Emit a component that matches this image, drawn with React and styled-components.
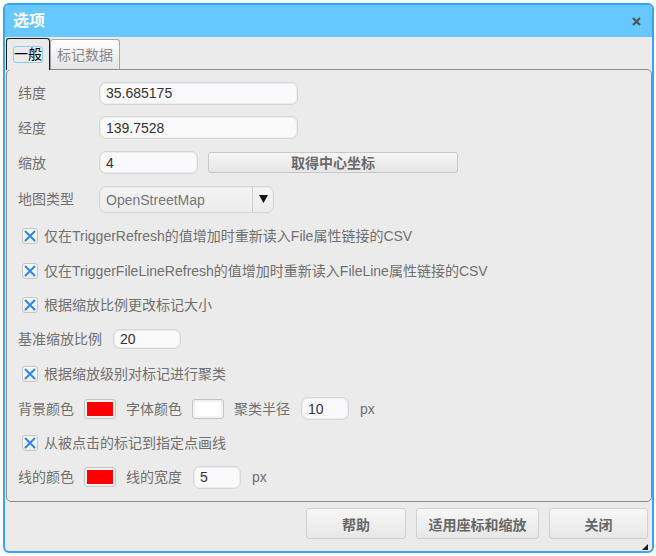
import React from "react";
import styled, { createGlobalStyle } from "styled-components";

const GlobalStyle = createGlobalStyle`
  html, body { margin: 0; padding: 0; background: #ffffff; }
  body {
    font-family: "Liberation Sans", "Noto Sans CJK SC", sans-serif;
    font-size: 14px;
  }
  * { box-sizing: border-box; }
`;

const Page = styled.div`
  padding: 3px 2px 3px 3px;
`;

const Dialog = styled.div`
  position: relative;
  width: 651px;
  height: 550px;
  border: 2px solid #3aa3f3;
  border-radius: 6px;
  background: #ebebeb;
  display: flex;
  flex-direction: column;
  overflow: hidden;
`;

const TitleBar = styled.div`
  height: 32px;
  flex: none;
  background: #66c8ff;
  display: flex;
  align-items: center;
  justify-content: space-between;
  padding: 0 11px 0 8px;
`;

const Title = styled.span`
  color: #ffffff;
  font-weight: bold;
  font-size: 16px;
  line-height: 16px;
`;

const CloseBtn = styled.span`
  display: flex;
  width: 9px;
  height: 9px;
`;

const Body = styled.div`
  flex: 1;
  display: flex;
  flex-direction: column;
  padding: 1px 0 0 1px;
`;

const TabRow = styled.div`
  display: flex;
  align-items: flex-end;
  height: 32px;
  margin-bottom: -1px;
  position: relative;
  z-index: 1;
`;

const Tab = styled.div`
  height: ${(p) => (p.$active ? "32px" : "30px")};
  margin-bottom: ${(p) => (p.$active ? "0" : "1px")};
  width: ${(p) => p.$w}px;
  border: 1px solid ${(p) => (p.$active ? "#1a1a1a" : "#a8a8a8")};
  border-bottom: none;
  border-radius: 3px 3px 0 0;
  background: ${(p) =>
    p.$active ? "#ebebeb" : "linear-gradient(#ffffff, #e4e4e4)"};
  color: ${(p) => (p.$active ? "#000000" : "#888888")};
  display: flex;
  align-items: center;
  padding-left: 6px;
  font-size: 14px;
  line-height: 16px;
`;

const FocusRing = styled.span`
  border: 1px solid #8ccdf6;
  border-radius: 3px;
  line-height: 15px;
`;

const Panel = styled.div`
  height: 433px;
  border: 1px solid #8a8a8a;
  border-radius: 5px;
  padding: 6px 0 0 0;
  display: flex;
  flex-direction: column;
`;

const Row = styled.div`
  height: ${(p) => p.$h}px;
  display: flex;
  align-items: center;
  gap: 10px;
  padding-left: ${(p) => (p.$check ? 15 : 11)}px;
  color: #707070;
  line-height: 16px;
`;

const Label = styled.span`
  width: ${(p) => (p.$w ? `${p.$w}px` : "auto")};
  flex: none;
  color: #707070;
  white-space: nowrap;
`;

const TextInput = styled.div`
  width: ${(p) => p.$w}px;
  height: ${(p) => p.$h || 23}px;
  margin: 0 ${(p) => p.$m || 0}px;
  border: 1px solid #d6d6d6;
  box-shadow: inset 0 0 0 1px #ececec;
  border-radius: 7px;
  background: #fafafc;
  color: #333333;
  display: flex;
  align-items: center;
  padding-left: 6px;
  flex: none;
`;

const WideButton = styled.div`
  width: 250px;
  height: 21px;
  border: 1px solid #c8c8c8;
  border-radius: 3px;
  background: linear-gradient(#f6f6f6, #e6e6e6);
  color: #6a6a6a;
  font-weight: bold;
  display: flex;
  align-items: center;
  justify-content: center;
  flex: none;
`;

const Select = styled.div`
  width: 175px;
  height: 27px;
  border: 1px solid #d6d6d6;
  box-shadow: inset 0 0 0 1px #ececec;
  border-radius: 7px;
  background: linear-gradient(#f4f4f4, #ececec);
  display: flex;
  align-items: stretch;
  color: #777777;
  flex: none;
`;

const SelectText = styled.span`
  flex: 1;
  display: flex;
  align-items: center;
  padding: 2px 0 0 6px;
  border-right: 1px solid #cfcfcf;
`;

const SelectArrow = styled.span`
  width: 20px;
  display: flex;
  align-items: center;
  justify-content: center;
`;

const Check = styled.span`
  width: 16px;
  height: 16px;
  border: 1px solid #c6c6c6;
  border-radius: 3px;
  background: linear-gradient(#fbfbfb, #ededed);
  display: flex;
  align-items: center;
  justify-content: center;
  flex: none;
  margin-right: -4px;
`;

const Swatch = styled.span`
  width: 32px;
  height: 20px;
  border: 1px solid #c4c4c4;
  border-radius: 3px;
  padding: 2px;
  background: #f2f2f2;
  display: flex;
  flex: none;
`;

const SwatchFill = styled.span`
  flex: 1;
  background: ${(p) => p.$c};
`;

const Footer = styled.div`
  flex: 1;
  display: flex;
  justify-content: flex-end;
  align-items: flex-start;
  gap: 10px;
  padding: 6px 4px 0 0;
`;

const DlgButton = styled.div`
  width: ${(p) => p.$w}px;
  height: 31px;
  border: 1px solid #d0d0d0;
  border-radius: 3px;
  background: linear-gradient(#f7f7f7, #e7e7e7);
  color: #676767;
  font-weight: bold;
  display: flex;
  align-items: center;
  justify-content: center;
`;

const Grip = styled.span`
  position: absolute;
  right: 4px;
  bottom: 1px;
  width: 0;
  height: 0;
  border-left: 6px solid transparent;
  border-bottom: 6px solid #1a1a1a;
`;

const XMark = () => (
  <svg width="14" height="14" viewBox="0 0 14 14">
    <path d="M2.5 2.5 L11.5 11.5 M11.5 2.5 L2.5 11.5" stroke="#2f86e6" strokeWidth="2" strokeLinecap="round" />
  </svg>
);

const CheckRow = ({ h, children }) => (
  <Row $h={h} $check>
    <Check>
      <XMark />
    </Check>
    <span>{children}</span>
  </Row>
);

export default function App() {
  return (
    <Page>
      <GlobalStyle />
      <Dialog>
        <TitleBar>
          <Title>选项</Title>
          <CloseBtn>
            <svg width="9" height="9" viewBox="0 0 9 9">
              <path d="M1 1 L8 8 M8 1 L1 8" stroke="#555555" strokeWidth="2.2" />
            </svg>
          </CloseBtn>
        </TitleBar>
        <Body>
          <TabRow>
            <Tab $active $w={44}>
              <FocusRing>一般</FocusRing>
            </Tab>
            <Tab $w={70}>标记数据</Tab>
          </TabRow>
          <Panel>
            <Row $h={34}>
              <Label $w={71}>纬度</Label>
              <TextInput $w={199}>35.685175</TextInput>
            </Row>
            <Row $h={35}>
              <Label $w={71}>经度</Label>
              <TextInput $w={199}>139.7528</TextInput>
            </Row>
            <Row $h={35}>
              <Label $w={71}>缩放</Label>
              <TextInput $w={99}>4</TextInput>
              <WideButton>取得中心坐标</WideButton>
            </Row>
            <Row $h={38}>
              <Label $w={71}>地图类型</Label>
              <Select>
                <SelectText>OpenStreetMap</SelectText>
                <SelectArrow>
                  <svg width="9" height="8" viewBox="0 0 9 8">
                    <path d="M0 0 H9 L4.5 8 Z" fill="#111111" />
                  </svg>
                </SelectArrow>
              </Select>
            </Row>
            <CheckRow h={36}>仅在TriggerRefresh的值增加时重新读入File属性链接的CSV</CheckRow>
            <CheckRow h={34}>仅在TriggerFileLineRefresh的值增加时重新读入FileLine属性链接的CSV</CheckRow>
            <CheckRow h={34}>根据缩放比例更改标记大小</CheckRow>
            <Row $h={34}>
              <Label>基准缩放比例</Label>
              <TextInput $w={68} $h={20} $m={1}>20</TextInput>
            </Row>
            <CheckRow h={36}>根据缩放级别对标记进行聚类</CheckRow>
            <Row $h={33}>
              <Label>背景颜色</Label>
              <Swatch>
                <SwatchFill $c="#ff0000" />
              </Swatch>
              <Label>字体颜色</Label>
              <Swatch>
                <SwatchFill $c="#ffffff" />
              </Swatch>
              <Label>聚类半径</Label>
              <TextInput $w={48} $m={1}>10</TextInput>
              <Label>px</Label>
            </Row>
            <CheckRow h={35}>从被点击的标记到指定点画线</CheckRow>
            <Row $h={34}>
              <Label>线的颜色</Label>
              <Swatch>
                <SwatchFill $c="#ff0000" />
              </Swatch>
              <Label>线的宽度</Label>
              <TextInput $w={48} $m={1}>5</TextInput>
              <Label>px</Label>
            </Row>
          </Panel>
          <Footer>
            <DlgButton $w={100}>帮助</DlgButton>
            <DlgButton $w={123}>适用座标和缩放</DlgButton>
            <DlgButton $w={99}>关闭</DlgButton>
          </Footer>
        </Body>
        <Grip />
      </Dialog>
    </Page>
  );
}
